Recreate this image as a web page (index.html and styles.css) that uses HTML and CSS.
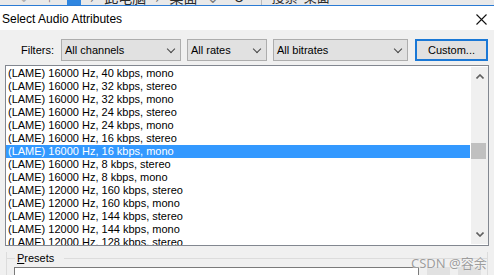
FILE: index.html
```html
<!DOCTYPE html>
<html lang="en">
<head>
  <meta charset="UTF-8">
  <title>Select Audio Attributes</title>
  <link rel="stylesheet" href="styles.css">
</head>
<body>
  <!-- window behind the dialog, only its bottom edge shows -->
  <div class="backdrop">
    <div class="bd-inner">
      <span class="bd-dim">⌄</span>
      <span class="bd-up">↑</span>
      <span class="bd-icon"></span>
      <span class="bd-text bd-sep">›</span>
      <span class="bd-text">此电脑</span>
      <span class="bd-text bd-sep">›</span>
      <span class="bd-text">桌面</span>
      <span class="bd-spacer"></span>
      <span class="bd-text bd-drop">⌄</span>
      <span class="bd-text bd-refresh">↻</span>
      <span class="bd-bar"></span>
      <span class="bd-text bd-search">搜索"桌面"</span>
    </div>
  </div>

  <div class="dialog">
    <div class="titlebar">
      <span class="title">Select Audio Attributes</span>
      <svg class="close" width="11" height="11" viewBox="0 0 11 11">
        <path d="M0.5 0.5 L10.5 10.5 M10.5 0.5 L0.5 10.5" stroke="#111" stroke-width="1.1" fill="none"/>
      </svg>
    </div>

    <div class="content">
      <div class="filters">
        <span class="filters-label">Filters:</span>
        <div class="select sel-channels"><span>All channels</span><i class="chev"></i></div>
        <div class="select sel-rates"><span>All rates</span><i class="chev"></i></div>
        <div class="select sel-bitrates"><span>All bitrates</span><i class="chev"></i></div>
        <button class="custom-btn">Custom...</button>
      </div>

      <div class="listbox">
        <div class="items">
          <div class="item">(LAME) 16000 Hz, 40 kbps, mono</div>
          <div class="item">(LAME) 16000 Hz, 32 kbps, stereo</div>
          <div class="item">(LAME) 16000 Hz, 32 kbps, mono</div>
          <div class="item">(LAME) 16000 Hz, 24 kbps, stereo</div>
          <div class="item">(LAME) 16000 Hz, 24 kbps, mono</div>
          <div class="item">(LAME) 16000 Hz, 16 kbps, stereo</div>
          <div class="item selected">(LAME) 16000 Hz, 16 kbps, mono</div>
          <div class="item">(LAME) 16000 Hz, 8 kbps, stereo</div>
          <div class="item">(LAME) 16000 Hz, 8 kbps, mono</div>
          <div class="item">(LAME) 12000 Hz, 160 kbps, stereo</div>
          <div class="item">(LAME) 12000 Hz, 160 kbps, mono</div>
          <div class="item">(LAME) 12000 Hz, 144 kbps, stereo</div>
          <div class="item">(LAME) 12000 Hz, 144 kbps, mono</div>
          <div class="item">(LAME) 12000 Hz, 128 kbps, stereo</div>
        </div>
        <div class="scrollbar">
          <svg class="arrow" width="8" height="5" viewBox="0 0 8 5">
            <path d="M0.5 4.5 L4 1 L7.5 4.5" stroke="#606060" stroke-width="1.6" fill="none"/>
          </svg>
          <div class="track">
            <div class="thumb"></div>
          </div>
          <svg class="arrow" width="8" height="5" viewBox="0 0 8 5">
            <path d="M0.5 0.5 L4 4 L7.5 0.5" stroke="#606060" stroke-width="1.6" fill="none"/>
          </svg>
        </div>
      </div>

      <div class="presets">
        <div class="presets-head">
          <span class="corner-line"></span>
          <span class="legend"><u>P</u>resets</span>
          <span class="legend-line"></span>
        </div>
        <div class="presets-row">
          <div class="preset-input"></div>
          <div class="small-btn"></div>
          <div class="small-btn"></div>
        </div>
      </div>
    </div>
  </div>

  <div class="watermark">CSDN @容余</div>
</body>
</html>
```

FILE: styles.css
```css
html, body {
  margin: 0;
  padding: 0;
}

body {
  width: 494px;
  height: 275px;
  overflow: hidden;
  position: relative;
  background: #f0f0f0;
  font-family: "Liberation Sans", "Noto Sans CJK SC", sans-serif;
  font-size: 11px;
  color: #000;
}

/* strip of the explorer window behind */
.backdrop {
  height: 5px;
  overflow: hidden;
  background: #e9e9e9;
}

.bd-inner {
  display: flex;
  align-items: center;
  height: 16px;
  margin-top: -11px;
  color: #2a2a2a;
  font-size: 14px;
  line-height: 16px;
}

.bd-inner span {
  flex: none;
}

.bd-dim {
  color: #b0b0b0;
  margin-left: 18px;
}

.bd-up {
  color: #555;
  margin-left: 16px;
}

.bd-icon {
  width: 14px;
  height: 16px;
  background: #2f86e0;
  margin-left: 14px;
}

.bd-text {
  margin-left: 10px;
  font-family: "Noto Sans CJK SC", sans-serif;
}

.bd-sep {
  margin-left: 9px;
  color: #666;
}

.bd-spacer {
  flex: 1;
}

.bd-drop {
  color: #777;
}

.bd-refresh {
  margin-left: 14px;
}

.bd-bar {
  width: 1px;
  height: 16px;
  background: #bbb;
  margin-left: 16px;
}

.bd-search {
  font-size: 13px;
  margin-left: 9px;
  margin-right: 22px;
}

/* dialog */
.dialog {
  border-top: 1px solid #2b7bd4;
}

.titlebar {
  height: 24px;
  background: #fff;
  display: flex;
  align-items: center;
  justify-content: space-between;
  padding: 0 7px 0 2px;
}

.title {
  font-size: 12px;
  margin-top: 1px;
}

.close {
  margin-top: 2px;
}

.content {
  padding: 9px 5px 0 5px;
}

.filters {
  display: flex;
  align-items: center;
  height: 22px;
}

.filters-label {
  margin-left: 16px;
  width: 40px;
}

.select {
  box-sizing: border-box;
  height: 22px;
  background: #e1e1e1;
  border: 1px solid #adadad;
  display: flex;
  align-items: center;
  justify-content: space-between;
  padding: 0 5px 0 3px;
  margin-right: 6px;
}

.sel-channels {
  width: 120px;
}

.sel-rates {
  width: 80px;
}

.sel-bitrates {
  width: 135px;
  margin-right: 7px;
}

.chev {
  width: 5px;
  height: 5px;
  border-right: 1px solid #444;
  border-bottom: 1px solid #444;
  transform: rotate(45deg);
  margin-top: -3px;
  margin-right: 1px;
}

.custom-btn {
  box-sizing: border-box;
  width: 73px;
  height: 22px;
  background: #e1e1e1;
  border: 2px solid #1a78d6;
  font-family: inherit;
  font-size: 11px;
  padding: 0;
  color: #000;
}

/* list */
.listbox {
  box-sizing: border-box;
  margin-top: 4px;
  width: 484px;
  height: 181px;
  border: 1px solid #828790;
  background: #fff;
  display: flex;
  overflow: hidden;
}

.items {
  width: 464px;
  padding-top: 1px;
  margin-right: 1px;
}

.item {
  height: 13px;
  line-height: 13px;
  padding-left: 2px;
  white-space: nowrap;
}

.item.selected {
  background: #3399ff;
  color: #fff;
}

.scrollbar {
  width: 17px;
  margin: 1px 0;
  background: #f0f0f0;
  display: flex;
  flex-direction: column;
  align-items: center;
}

.arrow {
  margin: 7px 0;
}

.track {
  flex: 1;
  width: 100%;
  padding-top: 57px;
}

.thumb {
  width: 15px;
  height: 16px;
  background: #c0c0c0;
}

/* presets group */
.presets {
  margin-top: 6px;
  margin-left: 1px;
  width: 482px;
  height: 30px;
  box-sizing: border-box;
  border-left: 1px solid #dcdcdc;
  border-right: 1px solid #dcdcdc;
  overflow: hidden;
}

.presets-head {
  display: flex;
  align-items: center;
  height: 12px;
}

.corner-line {
  width: 8px;
  height: 1px;
  background: #dcdcdc;
}

.legend {
  padding: 0 2px;
  line-height: 12px;
}

.legend-line {
  flex: 1;
  height: 1px;
  background: #dcdcdc;
  margin-left: 8px;
}

.presets-row {
  display: flex;
  margin-top: 3px;
  margin-left: 7px;
}

.preset-input {
  box-sizing: border-box;
  width: 405px;
  height: 22px;
  border: 1px solid #7a7a7a;
  background: #fff;
}

.small-btn {
  width: 23px;
  height: 22px;
  background: #e1e1e1;
  margin-left: 8px;
}

/* CSDN watermark over the corner */
.watermark {
  position: absolute;
  left: 411px;
  top: 253px;
  font-family: "Noto Sans", "Noto Sans CJK SC", sans-serif;
  font-size: 13px;
  color: #9d9d9d;
  text-shadow: 0 0 1px #fff;
}
```
